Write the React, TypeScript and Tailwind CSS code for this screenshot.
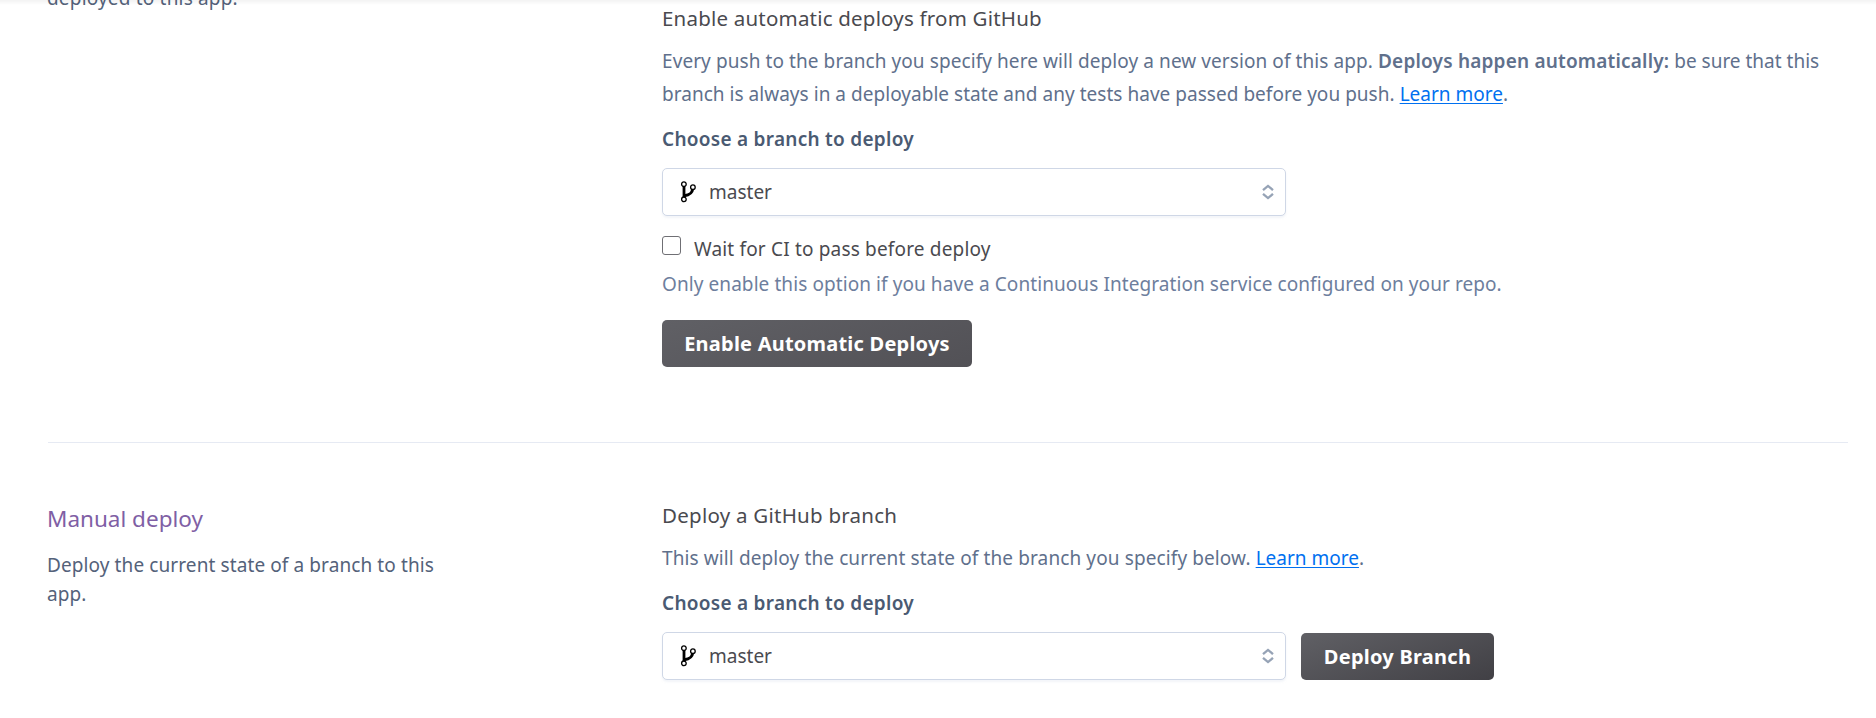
function BranchIcon() {
  return (
    <svg className="h-[22px] w-[17px] shrink-0" viewBox="0 0 17 22" fill="none" stroke="#000">
      <path d="M4 5.2V17" strokeWidth="2.8" />
      <path d="M4.2 14.8C10 13.8 12.3 12.2 12.6 8.2" strokeWidth="3" />
      <circle cx="3.9" cy="3.2" r="2.3" fill="#fff" strokeWidth="1.3" />
      <circle cx="12.9" cy="6.2" r="2.3" fill="#fff" strokeWidth="1.3" />
      <circle cx="3.9" cy="18.3" r="2.3" fill="#fff" strokeWidth="1.3" />
    </svg>
  );
}

function SortIcon() {
  return (
    <svg className="h-4 w-3 shrink-0" viewBox="0 0 12 16" fill="none" stroke="#96a3b6" strokeWidth="2.3">
      <path d="M1 6.2 6 1.9 11 6.2" />
      <path d="M1 9.8 6 14.1 11 9.8" />
    </svg>
  );
}

function BranchSelect() {
  return (
    <div className="flex h-12 w-[624px] items-center rounded-[5px] border border-[#cfd7e6] bg-white pr-[11px] pl-[17px] shadow-[0_2px_2px_rgba(207,215,230,0.25)]">
      <BranchIcon />
      <span className="ml-3 flex-1 text-[19px] leading-7 text-[#4a4a4f]">master</span>
      <SortIcon />
    </div>
  );
}

function LearnMore() {
  return (
    <a href="#" className="tracking-normal text-[#0070f0] underline decoration-1 underline-offset-2">
      Learn more
    </a>
  );
}

export default function App() {
  return (
    <div className="relative h-[718px] overflow-hidden bg-white pr-[28px] pl-12 font-['Noto_Sans',sans-serif] whitespace-nowrap">
      <div className="absolute inset-x-0 top-0 h-[5px] bg-linear-to-b from-black/5 to-transparent" />

      <section className="flex h-[442px]">
        <div className="w-[614px]">
          <p className="-mt-4 -ml-px text-[19px] leading-[29px] tracking-[0.18px] text-[#54627a]">deployed to this app.</p>
        </div>
        <div className="flex-1 pt-1">
          <h3 className="text-[20.5px] leading-7 tracking-[0.2px] text-[#4a4a4f]">Enable automatic deploys from GitHub</h3>
          <div className="mt-[13px] text-[19px] leading-[33px] text-[#60708c]">
            <p className="tracking-[0.08px]">
              Every push to the branch you specify here will deploy a new version of this app.{' '}
              <strong className="font-semibold tracking-[0.19px]">Deploys happen automatically:</strong>
              <span className="tracking-normal"> be sure that this</span>
            </p>
            <p className="tracking-[0.03px]">
              branch is always in a deployable state and any tests have passed before you push. <LearnMore />.
            </p>
          </div>
          <p className="mt-4 text-[19px] leading-6 font-semibold tracking-[0.27px] text-[#4a5a72]">Choose a branch to deploy</p>
          <div className="mt-[17px]">
            <BranchSelect />
          </div>
          <label className="mt-[19px] flex items-start">
            <input type="checkbox" className="mt-px h-[19px] w-[19px] appearance-none rounded-[3px] border border-[#6f6f74] bg-white" />
            <span className="ml-[13px] text-[19px] leading-7 tracking-[0.17px] text-[#4a4a4f]">Wait for CI to pass before deploy</span>
          </label>
          <p className="mt-[7px] text-[19px] leading-7 tracking-[0.08px] text-[#6d7e9d]">
            Only enable this option if you have a Continuous Integration service configured on your repo.
          </p>
          <button className="mt-[22px] flex h-[47px] w-[310px] items-center justify-center rounded-[5px] bg-linear-[160deg] from-[#606065] to-[#525156] text-[20px] leading-7 font-bold tracking-[0.22px] text-white">
            Enable Automatic Deploys
          </button>
        </div>
      </section>

      <section className="flex border-t border-[#e6eaf3]">
        <div className="w-[614px] pt-[60px]">
          <h2 className="-ml-px text-[22.5px] leading-8 text-[#7f5fa5]">Manual deploy</h2>
          <p className="mt-4 -ml-px text-[19px] leading-[29px] tracking-[0.1px] text-[#54627a]">
            Deploy the current state of a branch to this
            <br />
            app.
          </p>
        </div>
        <div className="flex-1 pt-[58px]">
          <h3 className="text-[20.5px] leading-7 tracking-[0.25px] text-[#4a4a4f]">Deploy a GitHub branch</h3>
          <p className="mt-[13px] text-[19px] leading-[33px] tracking-[0.11px] text-[#60708c]">
            This will deploy the current state of the branch you specify below. <LearnMore />.
          </p>
          <p className="mt-4 text-[19px] leading-6 font-semibold tracking-[0.27px] text-[#4a5a72]">Choose a branch to deploy</p>
          <div className="mt-[17px] flex items-end gap-[15px]">
            <BranchSelect />
            <button className="flex h-[47px] w-[193px] items-center justify-center rounded-[5px] bg-linear-[160deg] from-[#606065] to-[#414045] text-[20px] leading-7 font-bold tracking-[0.25px] text-white">
              Deploy Branch
            </button>
          </div>
        </div>
      </section>
    </div>
  );
}
